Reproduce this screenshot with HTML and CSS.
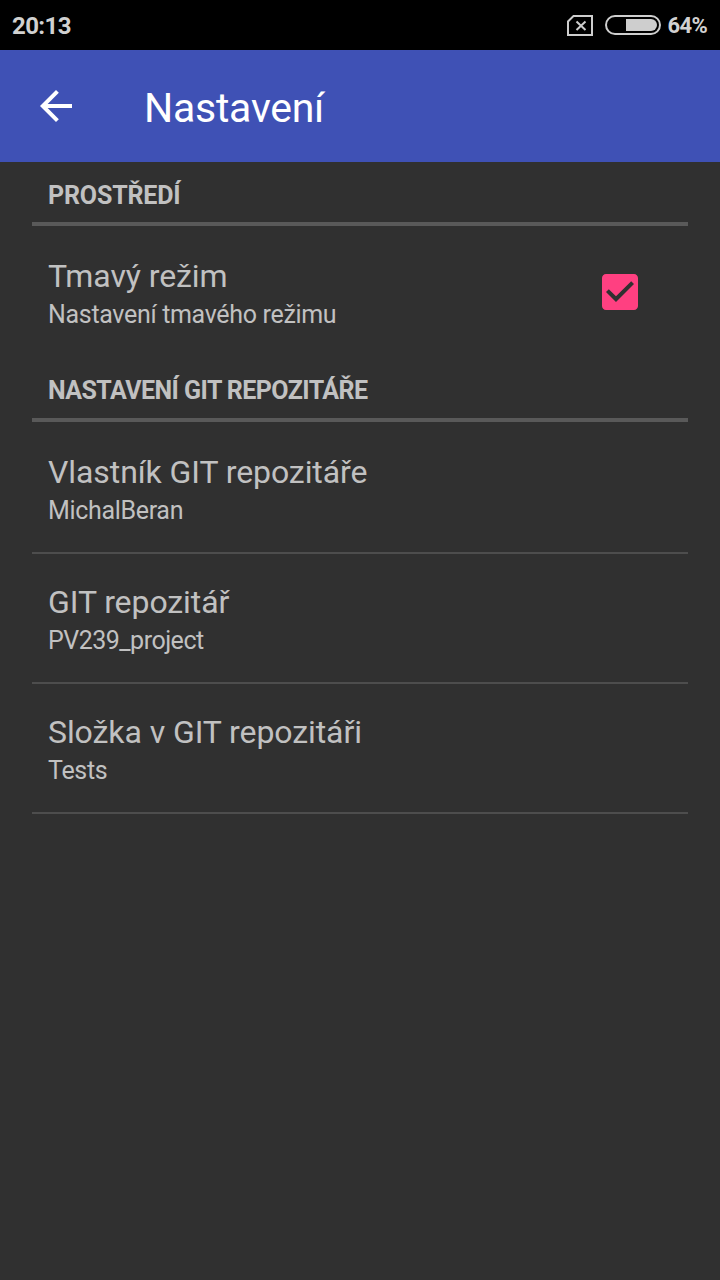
FILE: index.html
```html
<!DOCTYPE html>
<html lang="cs">
<head>
<meta charset="utf-8">
<title>Nastavení</title>
<link rel="stylesheet" href="styles.css">
</head>
<body>
<div class="status">
  <span class="clock">20:13</span>
  <svg class="sim" width="28" height="22" viewBox="0 0 28 22"><path d="M7.500 2H26V21H2V7.500Z"/><path class="cross" d="M10.500 7.500l9 8.500M19.500 7.500l-9 8.500"/></svg>
  <svg class="battery" width="56" height="20" viewBox="0 0 56 20"><rect x="1" y="1" width="54" height="18" rx="9"/><path d="M21 4H46a6 6 0 0 1 0 12H21Z"/></svg>
  <span class="percent">64%</span>
</div>
<header class="bar">
  <svg class="back" width="48" height="48" viewBox="0 0 24 24"><path d="M20 11H7.830l5.590-5.590L12 4l-8 8 8 8 1.410-1.410L7.830 13H20v-2z"/></svg>
  <h1 class="title">Nastavení</h1>
</header>
<main class="list">
  <h2 class="section first"><span class="text">PROSTŘEDÍ</span></h2>
  <div class="row toggle">
    <div class="labels"><div class="name">Tmavý režim</div><div class="summary">Nastavení tmavého režimu</div></div>
    <svg class="check" width="36" height="36" viewBox="3 3 18 18"><path d="M19 3H5c-1.110 0-2 .9-2 2v14c0 1.100.89 2 2 2h14c1.110 0 2-.9 2-2V5c0-1.100-.89-2-2-2zm-9 14l-5-5 1.410-1.410L10 14.170l7.590-7.590L19 8l-9 9z"/></svg>
  </div>
  <h2 class="section"><span class="text">NASTAVENÍ GIT REPOZITÁŘE</span></h2>
  <div class="row"><div class="labels"><div class="name">Vlastník GIT repozitáře</div><div class="summary">MichalBeran</div></div></div>
  <div class="row"><div class="labels"><div class="name">GIT repozitář</div><div class="summary tight">PV239_project</div></div></div>
  <div class="row"><div class="labels"><div class="name">Složka v GIT repozitáři</div><div class="summary">Tests</div></div></div>
</main>
</body>
</html>
```
FILE: styles.css
```css
* { box-sizing: border-box; }
body { margin: 0; min-height: 1280px; background: #303030; color: #c1c1c1; font-family: Roboto, sans-serif; }
.status { height: 50px; background: #000; color: #d1d1d1; display: flex; align-items: center; padding: 1px 13px 0 12px; font-size: 24px; font-weight: 700; }
.clock { flex: 1; letter-spacing: -.6px; }
.sim { fill: none; stroke: #cecece; stroke-width: 2; margin: 0 11px 2px 0; }
.battery { margin: 0 7px 1px 0; }
.battery rect { fill: none; stroke: #cecece; stroke-width: 2; }
.battery path { fill: #cecece; }
.percent { font-size: 22px; letter-spacing: -.7px; }
.bar { height: 112px; background: #3f51b5; display: flex; align-items: center; padding-left: 32px; }
.back { fill: #fff; }
.title { margin: 4px 0 0 64px; color: #fff; font-size: 41px; font-weight: 400; letter-spacing: -.25px; }
.list { padding: 0 32px; }
.section { height: 66px; margin: 0; padding: 7px 16px 0; display: flex; align-items: center; border-bottom: 4px solid #595959; font-size: 25px; font-weight: 700; letter-spacing: -.56px; }
.first { height: 64px; padding-top: 7px; letter-spacing: -.15px; }
.row { height: 132px; padding: 30px 16px 0; border-bottom: 2px solid #4d4d4d; display: flex; }
.row + .row { height: 130px; padding-top: 28px; }
.labels { flex: 1; }
.name { margin-bottom: 2px; font-size: 32px; line-height: 40px; letter-spacing: -.08px; }
.summary { font-size: 25px; line-height: 34px; letter-spacing: -.32px; }
.tight { letter-spacing: -.5px; }
.toggle { height: 130px; border-bottom: 0; padding-right: 50px; }
.check { fill: #ff4081; margin-top: 18px; }
```
